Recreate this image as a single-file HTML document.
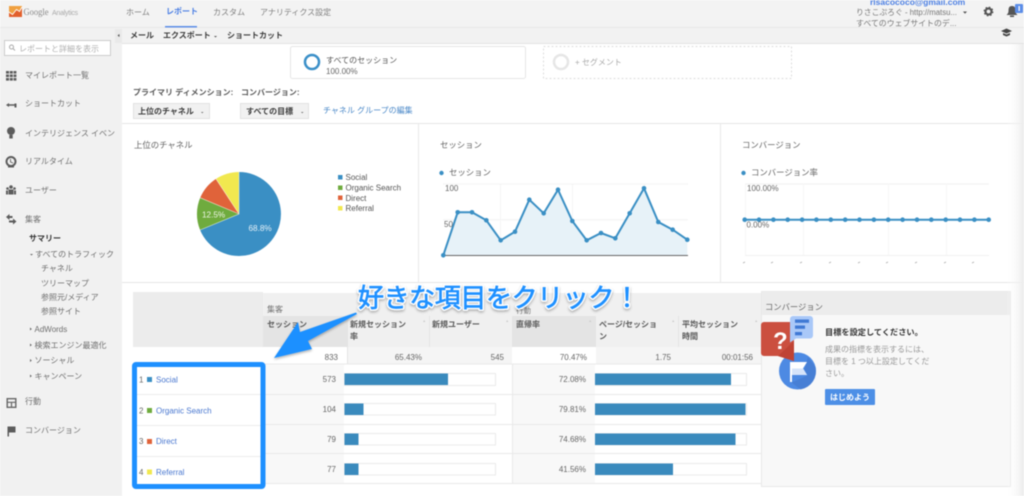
<!DOCTYPE html>
<html lang="ja"><head><meta charset="utf-8"><title>Google Analytics</title>
<style>
html,body{margin:0;padding:0;background:#fff;width:1024px;height:496px;overflow:hidden}
svg{display:block;position:absolute;left:0;top:0;filter:blur(.5px)}
text{font-family:"Liberation Sans","Noto Sans CJK JP",sans-serif;font-size:8px;fill:#666;white-space:pre}
.nav{fill:#808080}.d{fill:#3c3c3c;font-weight:bold}
.s{fill:#727272}.s2{fill:#6e6e6e}.lk{fill:#4a78d0}
.h{fill:#5a5a5a;font-weight:bold}.v{fill:#666;text-anchor:end}
.t{font-size:8.400px;fill:#666}.e{font-size:8px;fill:#555}
.big{font-size:26px;fill:#1e90ff}
.bo{stroke:#fff;stroke-width:3.500px;stroke-linejoin:round;fill:#fff}
.bi{stroke:#1e90ff;stroke-width:.7px}
</style></head><body>
<svg width="1024" height="496" viewBox="0 0 1024 496" xmlns="http://www.w3.org/2000/svg">
<defs>
<linearGradient id="rg" x1="0" x2="1" y1="0" y2="0"><stop offset="0" stop-color="#fff" stop-opacity="0"/><stop offset="1" stop-color="#ececec"/></linearGradient>
<filter id="sh" x="-10%" y="-30%" width="120%" height="170%"><feDropShadow dx="0" dy="1.500" stdDeviation="1.200" flood-color="#000" flood-opacity=".3"/></filter>
</defs>
<!-- chrome -->
<rect x="0" y="0" width="1024" height="496" fill="#fff"/>
<rect x="0" y="0" width="122" height="496" fill="#f1f1f1"/>
<rect x="0" y="0" width="1024" height="27" fill="#f3f3f3"/>
<rect x="122" y="27" width="902" height="17" fill="#f2f2f2"/>
<rect x="122" y="43" width="902" height="1" fill="#e2e2e2"/>
<rect x="0" y="27" width="1024" height="1" fill="#e8e8e8"/>
<rect x="115" y="29" width="7" height="14" fill="#e9e9e9"/>
<path d="M119.500 34l-2 1.500 2 1.500z" fill="#555"/>
<!-- logo -->
<rect x="9" y="6" width="13" height="11" fill="#f0a040"/>
<path d="M9 17v-5l3.500 2.500 4-5 3 2 2.500-4.500v10z" fill="#e2602c"/>
<path d="M9 12l3.500 2.500 4-5 3 2 2.500-4.500" fill="none" stroke="#fff" stroke-width=".9"/>
<text x="23.500" y="15" style="font-size:9.500px;fill:#888;font-family:'Liberation Serif',serif" textLength="25" lengthAdjust="spacingAndGlyphs">Google</text>
<text x="52" y="15" style="font-size:7px;fill:#aaa" textLength="26" lengthAdjust="spacing">Analytics</text>
<!-- nav -->
<text x="126" y="15" class="nav">ホーム</text>
<text x="166" y="14" style="fill:#4d80e4;font-weight:bold">レポート</text>
<text x="213" y="15" class="nav">カスタム</text>
<text x="260" y="15" class="nav">アナリティクス設定</text>
<rect x="165" y="26" width="32" height="1.500" fill="#5b8de8"/>
<!-- account -->
<text x="870" y="5" style="fill:#4d80e4;font-size:8.500px;font-weight:bold">rlsacococo@gmail.com</text>
<text x="856" y="15" style="fill:#777;font-size:7.800px">りさこぷろぐ - http://matsu...</text>
<path d="M963 11.500h4l-2 2.200z" fill="#555"/>
<text x="856" y="26" style="fill:#777;font-size:7.900px">すべてのウェブサイトのデ...</text>
<circle cx="988.500" cy="11.500" r="3" fill="none" stroke="#555" stroke-width="2.200"/>
<circle cx="988.500" cy="11.500" r="4.300" fill="none" stroke="#555" stroke-width="1.200" stroke-dasharray="1.700 1.700"/>
<path d="M1012 6c-3 0-3.500 2-3.500 5 0 2-1 3-2 4h11c-1-1-2-2-2-4 0-3-.5-5-3.500-5z" fill="#555"/>
<rect x="1010" y="15.500" width="4" height="1.500" fill="#555"/>
<rect x="1015" y="4" width="8" height="9" rx="1" fill="#5b8de8"/>
<rect x="1018.500" y="6" width="1.300" height="5" fill="#fff"/>
<path d="M1001 31l5.500-2.500 5.500 2.500-5.500 2.500z" fill="#444"/><path d="M1003 33v2l3.500 1.500 3.500-1.500v-2l-3.500 1.500z" fill="#444"/>
<!-- toolbar -->
<text x="130" y="38" class="d">メール</text>
<text x="163" y="38" class="d">エクスポート</text>
<path d="M214 36h3l-1.500 1.500z" fill="#555"/>
<text x="227" y="38" class="d">ショートカット</text>
<!-- search -->
<rect x="4.500" y="40.500" width="106" height="15" fill="#fff" stroke="#ccc"/>
<circle cx="11.500" cy="47" r="2" fill="none" stroke="#aaa"/><path d="M13 48.500l2 2" stroke="#aaa"/>
<text x="19" y="51.500" style="fill:#b0b0b0">レポートと詳細を表示</text>
<!-- sidebar -->
<g fill="#5c5c5c">
<rect x="6" y="71" width="3" height="2.600"/><rect x="9.800" y="71" width="3" height="2.600"/><rect x="13.600" y="71" width="2.800" height="2.600"/>
<rect x="6" y="74.500" width="3" height="2.600"/><rect x="9.800" y="74.500" width="3" height="2.600"/><rect x="13.600" y="74.500" width="2.800" height="2.600"/>
<rect x="6" y="78" width="3" height="2.600"/><rect x="9.800" y="78" width="3" height="2.600"/><rect x="13.600" y="78" width="2.800" height="2.600"/>
<path d="M6 105l3-2v1.300h7.500v1.400h-7.500v1.300z"/><rect x="14.500" y="103.500" width="2" height="4"/>
<circle cx="11" cy="131" r="4"/><rect x="9.300" y="135" width="3.400" height="3.500"/>
<path d="M11 156a5.500 5.500 0 1 0 .01 0zm0 2a3.500 3.500 0 1 1-.01 0z" fill-rule="evenodd"/><path d="M10.500 159v3l2.500 1" fill="none" stroke="#555" stroke-width=".8"/><path d="M8 166h6v1.500H8z"/>
<circle cx="11" cy="187" r="1.800"/><circle cx="7.500" cy="188.500" r="1.300"/><circle cx="14.500" cy="188.500" r="1.300"/>
<rect x="8.500" y="189.500" width="5" height="5"/><rect x="6" y="190.500" width="2" height="4"/><rect x="14" y="190.500" width="2" height="4"/>
<path d="M6 217l3.500-3v2h3v2h-3v2z"/><path d="M16.500 221.500l-3.500-3v2h-4v2h4v2z"/>
<path d="M6.500 398h10v10h-10zm1.400 1.400v2.300h7.200v-2.300zm0 3.500v3.700h3v-3.700zm4.200 0v3.700h3v-3.700z" fill-rule="evenodd" fill="#666"/>
<path d="M7.500 426.500h8v6h-6.500v4h-1.500z"/>
</g>
<text x="25" y="78" class="s">マイレポート一覧</text>
<text x="25" y="106" class="s">ショートカット</text>
<text x="25" y="136" class="s">インテリジェンス イベン</text>
<text x="25" y="164" class="s">リアルタイム</text>
<text x="25" y="193" class="s">ユーザー</text>
<text x="25" y="222" class="s">集客</text>
<text x="29" y="241" style="fill:#333;font-weight:bold">サマリー</text>
<path d="M30 254h3l-1.500 1.500z" fill="#666"/>
<text x="35" y="257" class="s2">すべてのトラフィック</text>
<text x="41" y="271" class="s2">チャネル</text>
<text x="41" y="286" class="s2">ツリーマップ</text>
<text x="41" y="300" class="s2">参照元/メディア</text>
<text x="41" y="314" class="s2">参照サイト</text>
<g fill="#666"><path d="M30 327.500l1.800 1.500-1.800 1.500z"/><path d="M30 343.500l1.800 1.500-1.800 1.500z"/><path d="M30 359l1.800 1.500-1.800 1.500z"/><path d="M30 374.500l1.800 1.500-1.800 1.500z"/></g>
<text x="34.500" y="332" class="s2">AdWords</text>
<text x="34.500" y="348" class="s2">検索エンジン最適化</text>
<text x="34.500" y="363" class="s2">ソーシャル</text>
<text x="34.500" y="379" class="s2">キャンペーン</text>
<text x="25" y="404" class="s">行動</text>
<text x="25" y="433" class="s">コンバージョン</text>
<!-- segments -->
<rect x="290.500" y="46.500" width="235" height="32" rx="2" fill="#fff" stroke="#e6e6e6"/>
<circle cx="312" cy="62" r="7" fill="none" stroke="#3a8fc8" stroke-width="2.500"/>
<text x="326" y="63" style="fill:#555">すべてのセッション</text>
<text x="326" y="74" style="fill:#666">100.00%</text>
<rect x="543.500" y="46.500" width="248" height="32" fill="#fff" stroke="#ddd" stroke-dasharray="2 2"/>
<circle cx="561" cy="62" r="7" fill="none" stroke="#e6e6e6" stroke-width="2.500"/>
<text x="575" y="65" style="fill:#aaa">+ セグメント</text>
<!-- dimension -->
<text x="133" y="95" class="h">プライマリ ディメンション:</text>
<text x="241" y="95" class="h">コンバージョン:</text>
<rect x="133.500" y="103.500" width="76" height="15" fill="#f1f1f1" stroke="#e2e2e2"/>
<rect x="240.500" y="103.500" width="68" height="15" fill="#f1f1f1" stroke="#e2e2e2"/>
<text x="138" y="114" class="d">上位のチャネル</text>
<text x="246" y="114" class="d">すべての目標</text>
<path d="M201 112h2.500l-1.250 1.200z" fill="#666"/><path d="M301 112h2.500l-1.250 1.200z" fill="#666"/>
<text x="323" y="113" style="fill:#4a88c8">チャネル グループの編集</text>
<!-- chart panel borders -->
<rect x="122" y="123" width="902" height="1" fill="#e6e6e6"/>
<rect x="122" y="282" width="902" height="1" fill="#e6e6e6"/>
<rect x="418" y="124" width="1" height="158" fill="#e9e9e9"/>
<rect x="720" y="124" width="1" height="158" fill="#e9e9e9"/>
<!-- pie -->
<text x="134" y="148" class="t">上位のチャネル</text>
<path d="M239 214V172A42 42 0 1 1 200.100 230Z" fill="#3a8fc4"/>
<path d="M239 214L200.100 230A42 42 0 0 1 200.200 197.800Z" fill="#6fab3e"/>
<path d="M239 214L200.200 197.800A42 42 0 0 1 216 178.900Z" fill="#e0633a"/>
<path d="M239 214L216 178.900A42 42 0 0 1 239 172Z" fill="#f1e84f"/>
<path d="M239 172V214L200.100 230M239 214L200.200 197.800M239 214L216 178.900" fill="none" stroke="#fff" stroke-width=".6" opacity=".7"/>
<text x="202" y="217.500" style="fill:#eef5e6;font-size:8.200px">12.5%</text>
<text x="248.500" y="231" style="fill:#e6f1f8;font-size:8.200px">68.8%</text>
<rect x="338" y="175" width="4.500" height="4.500" fill="#3a8fc4"/>
<rect x="338" y="185.500" width="4.500" height="4.500" fill="#6fab3e"/>
<rect x="338" y="195.500" width="4.500" height="4.500" fill="#e0633a"/>
<rect x="338" y="206" width="4.500" height="4.500" fill="#f1e84f"/>
<text x="345.500" y="180" class="e">Social</text>
<text x="345.500" y="190.500" class="e">Organic Search</text>
<text x="345.500" y="201" class="e">Direct</text>
<text x="345.500" y="211" class="e">Referral</text>
<!-- session chart -->
<text x="440" y="148" class="t">セッション</text>
<circle cx="441.500" cy="173" r="2.200" fill="#3a8fc4"/>
<text x="449" y="175.500" class="t">セッション</text>
<path d="M443 184H688M443 219.700H688" stroke="#f3f3f3"/>
<path d="M500.500 184V255M572.500 184V255M644.500 184V255" stroke="#f5f5f5"/>
<path d="M443.300 255.300L457.700 212.300 472 212.300 486.300 220.300 500.700 240.300 515 231.700 529.300 199.700 543.700 213.300 558 189.700 572.300 221 586.700 240.300 601 233 615.300 238.300 629.700 213.300 644 188.300 658.300 222 672.700 229.700 687.300 239.700V255.300Z" fill="#e7f2f8"/>
<rect x="443" y="255" width="245" height="1" fill="#666"/>
<path d="M443.300 255.300L457.700 212.300 472 212.300 486.300 220.300 500.700 240.300 515 231.700 529.300 199.700 543.700 213.300 558 189.700 572.300 221 586.700 240.300 601 233 615.300 238.300 629.700 213.300 644 188.300 658.300 222 672.700 229.700 687.300 239.700" fill="none" stroke="#3a8fc4" stroke-width="2"/>
<g fill="#3a8fc4"><circle cx="443.300" cy="255.300" r="2.300"/><circle cx="457.700" cy="212.300" r="2.300"/><circle cx="472" cy="212.300" r="2.300"/><circle cx="486.300" cy="220.300" r="2.300"/><circle cx="500.700" cy="240.300" r="2.300"/><circle cx="515" cy="231.700" r="2.300"/><circle cx="529.300" cy="199.700" r="2.300"/><circle cx="543.700" cy="213.300" r="2.300"/><circle cx="558" cy="189.700" r="2.300"/><circle cx="572.300" cy="221" r="2.300"/><circle cx="586.700" cy="240.300" r="2.300"/><circle cx="601" cy="233" r="2.300"/><circle cx="615.300" cy="238.300" r="2.300"/><circle cx="629.700" cy="213.300" r="2.300"/><circle cx="644" cy="188.300" r="2.300"/><circle cx="658.300" cy="222" r="2.300"/><circle cx="672.700" cy="229.700" r="2.300"/><circle cx="687.300" cy="239.700" r="2.300"/></g>
<text x="445" y="191" style="fill:#666">100</text>
<text x="444" y="227" style="fill:#666">50</text>
<!-- conversion chart -->
<text x="742" y="148" class="t">コンバージョン</text>
<circle cx="743.500" cy="173" r="2.200" fill="#3a8fc4"/>
<text x="751" y="175.500" class="t">コンバージョン率</text>
<path d="M745 184H989M745 255.500H989" stroke="#f1f1f1"/>
<path d="M745.500 184V255M803.500 184V255M888.500 184V255M946.500 184V255" stroke="#f7f7f7"/>
<text x="747" y="191" style="fill:#666">100.00%</text>
<path d="M744.700 219.700H988.700" stroke="#3a8fc4" stroke-width="2"/>
<g fill="#3a8fc4"><circle cx="744.700" cy="219.700" r="2.300"/><circle cx="759" cy="219.700" r="2.300"/><circle cx="773.400" cy="219.700" r="2.300"/><circle cx="787.700" cy="219.700" r="2.300"/><circle cx="802.100" cy="219.700" r="2.300"/><circle cx="816.400" cy="219.700" r="2.300"/><circle cx="830.800" cy="219.700" r="2.300"/><circle cx="845.200" cy="219.700" r="2.300"/><circle cx="859.500" cy="219.700" r="2.300"/><circle cx="873.900" cy="219.700" r="2.300"/><circle cx="888.200" cy="219.700" r="2.300"/><circle cx="902.600" cy="219.700" r="2.300"/><circle cx="917" cy="219.700" r="2.300"/><circle cx="931.300" cy="219.700" r="2.300"/><circle cx="945.700" cy="219.700" r="2.300"/><circle cx="960" cy="219.700" r="2.300"/><circle cx="974.400" cy="219.700" r="2.300"/><circle cx="988.700" cy="219.700" r="2.300"/></g>
<text x="746.500" y="227.500" style="fill:#666">0.00%</text>
<path d="M743 263l2-1M771 263l2-1M800 263l2-1M829 263l2-1M858 263l2-1M886 263l2-1M915 263l2-1M944 263l2-1M972 263l2-1" stroke="#aaa" stroke-width=".8"/>
<!-- table -->
<rect x="133" y="292" width="130" height="55" fill="#ececec"/>
<rect x="263" y="293" width="498" height="54" fill="#f0f0f0"/>
<rect x="263" y="316" width="84" height="31" fill="#e4e4e4"/>
<rect x="512" y="316" width="84" height="31" fill="#e4e4e4"/>
<rect x="347" y="316" width="1" height="48" fill="#e4e4e4"/><rect x="429" y="316" width="1" height="48" fill="#e4e4e4"/><rect x="678" y="316" width="1" height="48" fill="#e4e4e4"/>
<rect x="263" y="347" width="84" height="17" fill="#fff"/>
<rect x="348" y="347" width="164" height="17" fill="#f5f5f5"/>
<rect x="512" y="347" width="84" height="17" fill="#fff"/>
<rect x="596" y="347" width="165" height="17" fill="#f5f5f5"/>
<rect x="265" y="364" width="79" height="119" fill="#f8f8f8"/>
<rect x="513" y="364" width="82" height="119" fill="#f8f8f8"/>
<g fill="#e9e9e9"><rect x="265" y="363.500" width="496" height="1"/><rect x="265" y="394" width="496" height="1"/><rect x="265" y="424" width="496" height="1"/><rect x="265" y="453" width="496" height="1"/><rect x="265" y="483" width="496" height="1"/><rect x="512" y="364" width="1" height="120"/></g>
<g fill="#ccc"><path d="M423 322l1.200-2 1.200 2z"/><path d="M506 322l1.200-2 1.200 2z"/><path d="M589 322l1.200-2 1.200 2z"/><path d="M672 322l1.200-2 1.200 2z"/><path d="M755 322l1.200-2 1.200 2z"/></g>
<text x="267" y="312" class="s">集客</text>
<text x="516" y="313" style="fill:#777;font-size:7.500px">行動</text>
<text x="267" y="327" class="h">セッション</text>
<text x="350" y="327" class="h">新規セッション</text><text x="350" y="339" class="h">率</text>
<text x="432" y="327" class="h">新規ユーザー</text>
<text x="516" y="327" class="h">直帰率</text>
<text x="599" y="327" class="h">ページ/セッショ</text><text x="599" y="339" class="h">ン</text>
<text x="682" y="327" class="h">平均セッション</text><text x="682" y="339" class="h">時間</text>
<text x="338" y="360" class="v">833</text><text x="422" y="360" class="v">65.43%</text><text x="504" y="360" class="v">545</text><text x="587" y="360" class="v">70.47%</text><text x="671" y="360" class="v">1.75</text><text x="753" y="360" class="v">00:01:56</text>
<text x="336" y="382" class="v">573</text><text x="336" y="412" class="v">104</text><text x="336" y="442" class="v">79</text><text x="336" y="472" class="v">77</text>
<text x="586" y="382" class="v">72.08%</text><text x="586" y="412" class="v">79.81%</text><text x="586" y="442" class="v">74.68%</text><text x="586" y="472" class="v">41.56%</text>
<!-- bars -->
<g fill="#fff" stroke="#eaeaea"><rect x="344.500" y="373.500" width="151" height="12"/><rect x="344.500" y="403.500" width="151" height="11.500"/><rect x="344.500" y="433.500" width="151" height="11.500"/><rect x="344.500" y="463.500" width="151" height="11.500"/>
<rect x="595.500" y="373.500" width="151" height="12"/><rect x="595.500" y="403.500" width="151" height="11.500"/><rect x="595.500" y="433.500" width="151" height="11.500"/><rect x="595.500" y="463.500" width="151" height="11.500"/></g>
<g fill="#3a8abd"><rect x="344.500" y="373.500" width="103.500" height="11.500"/><rect x="344.500" y="403.500" width="19" height="11.500"/><rect x="344.500" y="433.500" width="14" height="11.500"/><rect x="344.500" y="463.500" width="14" height="11.500"/>
<rect x="595" y="373.500" width="136" height="11.500"/><rect x="595" y="403.500" width="150.500" height="11.500"/><rect x="595" y="433.500" width="140.500" height="11.500"/><rect x="595" y="463.500" width="78" height="11.500"/></g>
<!-- left rows -->
<rect x="135" y="364" width="128" height="122" fill="#fff"/>
<g fill="#ececec"><rect x="137" y="394" width="124" height="1"/><rect x="137" y="425" width="124" height="1"/><rect x="137" y="456" width="124" height="1"/></g>
<text x="139" y="382.500">1</text><text x="139" y="413.500">2</text><text x="139" y="444">3</text><text x="139" y="475">4</text>
<rect x="147" y="377" width="5" height="5" fill="#3a8fc4"/><rect x="147" y="408" width="5" height="5" fill="#6fab3e"/><rect x="147" y="439" width="5" height="5" fill="#e0633a"/><rect x="147" y="469.500" width="5" height="5" fill="#f1e84f"/>
<text x="156" y="382.500" class="lk">Social</text><text x="156" y="413.500" class="lk">Organic Search</text><text x="156" y="444" class="lk">Direct</text><text x="156" y="475" class="lk">Referral</text>
<rect x="134.500" y="364.500" width="128.500" height="122" rx="1.500" fill="none" stroke="#1e90ff" stroke-width="5"/>
<!-- goal panel -->
<rect x="761.500" y="291.500" width="249" height="195" fill="#f8f8f8" stroke="#e8e8e8"/>
<rect x="762" y="292" width="248" height="23" fill="#ececec"/>
<text x="765" y="310" style="fill:#666;font-size:8.300px">コンバージョン</text>
<circle cx="797.500" cy="371" r="18.500" fill="#4d8ae3"/>
<path d="M808 357l7.500 10a18.500 18.500 0 0 1-15 22.500l-9-7 16-7-3-6z" fill="#4478cc" opacity=".6"/>
<path d="M761 325a3 3 0 0 1 3-3h30v39l-16-5h-14a3 3 0 0 1-3-3z" fill="#cb4f3f"/>
<path d="M794 341v20l-16-5z" fill="#bf4334"/>
<rect x="790" y="316" width="23" height="22.500" rx="3" fill="#a9c8f8"/>
<path d="M790 336v6.500l6-4z" fill="#a9c8f8"/>
<rect x="795" y="319.500" width="14" height="3.300" fill="#3f78d4"/><rect x="795" y="325.500" width="10" height="3.300" fill="#3f78d4"/><rect x="795" y="332" width="7" height="3.300" fill="#3f78d4"/>
<text x="773" y="349" style="font-size:24px;font-weight:bold;fill:#fff">?</text>
<path d="M790 362h17l-4 6.500 4 6.500H792v7h-2z" fill="#fff"/>
<path d="M792 368.500h11l4 6.500h-15z" fill="#d6e4fa"/>
<text x="825" y="335" style="fill:#333;font-size:8.200px;font-weight:bold">目標を設定してください。</text>
<text x="825" y="352" style="fill:#999">成果の指標を表示するには、</text>
<text x="825" y="364" style="fill:#999">目標を 1 つ以上設定してくだ</text>
<text x="825" y="376" style="fill:#999">さい。</text>
<rect x="825" y="389" width="50" height="16" rx="1" fill="#4d8fe6"/>
<text x="830" y="400" style="fill:#fff;font-weight:bold">はじめよう</text>
<!-- right shade -->
<rect x="1006" y="44" width="18" height="452" fill="url(#rg)"/>
<!-- annotation -->
<path d="M274 358L298 322 300 332 356 312.500 357 314 308 341 312 349Z" fill="#1e90ff" filter="url(#sh)"/>
<text x="358" y="307" class="big bo" filter="url(#sh)" textLength="282" lengthAdjust="spacing">好きな項目をクリック！</text>
<text x="358" y="307" class="big bi" textLength="282" lengthAdjust="spacing">好きな項目をクリック！</text>
</svg>
</body></html>
